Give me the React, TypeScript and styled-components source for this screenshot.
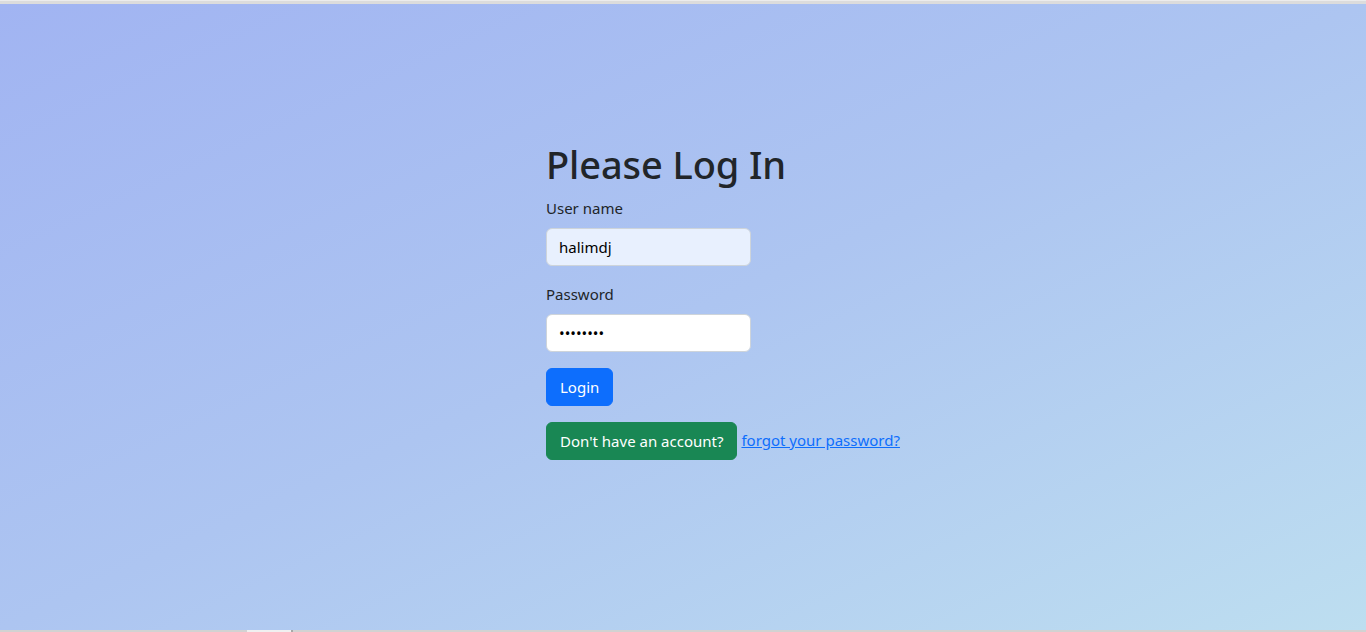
import styled, { createGlobalStyle } from 'styled-components';

const GlobalStyle = createGlobalStyle`
  html, body {
    margin: 0;
    padding: 0;
    height: 100%;
  }
  body {
    font-family: "Noto Sans", "Open Sans", "Liberation Sans", sans-serif;
    color: #212529;
  }
  * {
    box-sizing: border-box;
  }
`;

const Screen = styled.div`
  height: 632px;
  display: flex;
  flex-direction: column;
  overflow: hidden;
`;

const TopEdge = styled.div`
  height: 4px;
  background: #dcdcdc;
  border-top: 1px solid #ececec;
`;

const Main = styled.main`
  flex: 1;
  background: linear-gradient(to bottom right, #a1b4f2 0%, #adc5f1 50%, #bddef0 100%);
  padding-top: 136px;
`;

const BottomEdge = styled.div`
  height: 2px;
  display: flex;
  background: #d2d2d2;
`;

const BottomThumb = styled.div<{ $left: number; $width: number; $color: string }>`
  margin-left: ${(p) => p.$left}px;
  width: ${(p) => p.$width}px;
  background: ${(p) => p.$color};
`;

const Panel = styled.form`
  width: 274px;
  margin: 0 auto;
`;

const Heading = styled.h1`
  font-size: 38px;
  font-weight: 500;
  line-height: 48px;
  letter-spacing: -0.1px;
  margin: 0 0 8px;
  white-space: nowrap;
  color: #212529;
`;

const Field = styled.div`
  margin-bottom: 16px;
`;

const Label = styled.label`
  display: block;
  font-size: 15px;
  line-height: 24px;
  margin-bottom: 8px;
  color: #212529;
`;

const Input = styled.input<{ $filled?: boolean }>`
  display: block;
  width: 205px;
  height: 38px;
  padding: 6px 12px;
  font-family: inherit;
  font-size: 15px;
  line-height: 24px;
  color: #000;
  background: ${(p) => (p.$filled ? '#e8f0fe' : '#fff')};
  border: 1px solid #ced4da;
  border-radius: 6px;
  outline: none;
`;

const Button = styled.button<{ $variant: 'primary' | 'success' }>`
  display: inline-block;
  height: 38px;
  padding: 6px 13px;
  font-family: inherit;
  font-size: 15px;
  line-height: 24px;
  color: #fff;
  background: ${(p) => (p.$variant === 'primary' ? '#0d6efd' : '#198754')};
  border: 1px solid ${(p) => (p.$variant === 'primary' ? '#0d6efd' : '#198754')};
  border-radius: 6px;
  cursor: pointer;
  white-space: nowrap;
`;

const Actions = styled.div`
  display: flex;
  align-items: center;
  gap: 4px;
  width: max-content;
`;

const TextLink = styled.a`
  font-size: 15px;
  line-height: 24px;
  color: #0d6efd;
  text-decoration: underline;
  white-space: nowrap;
  margin-top: -2px;
`;

export default function App() {
  return (
    <>
      <GlobalStyle />
      <Screen>
        <TopEdge />
        <Main>
          <Panel onSubmit={(e) => e.preventDefault()}>
            <Heading>Please Log In</Heading>
            <Field>
              <Label htmlFor="username">User name</Label>
              <Input id="username" type="text" defaultValue="halimdj" $filled />
            </Field>
            <Field>
              <Label htmlFor="password">Password</Label>
              <Input id="password" type="password" defaultValue="halimdj1" />
            </Field>
            <Field>
              <Button type="submit" $variant="primary">Login</Button>
            </Field>
            <Actions>
              <Button type="button" $variant="success">Don't have an account?</Button>
              <TextLink href="#">forgot your password?</TextLink>
            </Actions>
          </Panel>
        </Main>
        <BottomEdge>
          <BottomThumb $left={247} $width={44} $color="#f0f0f0" />
          <BottomThumb $left={0} $width={2} $color="#a8a8a8" />
        </BottomEdge>
      </Screen>
    </>
  );
}
